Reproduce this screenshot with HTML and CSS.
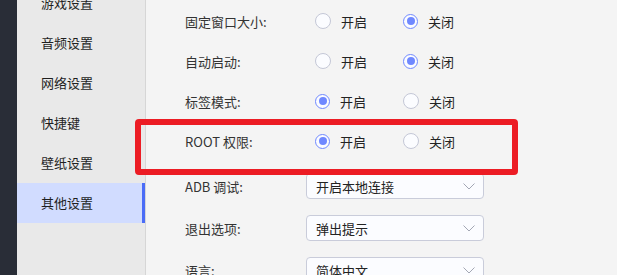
FILE: index.html
```html
<!DOCTYPE html>
<html lang="zh-CN">
<head>
    <meta charset="UTF-8">
    <meta name="viewport" content="width=device-width, initial-scale=1.0">
    <title>其他设置</title>
    <link rel="stylesheet" href="styles.css">
</head>
<body>
    <div class="app">
        <div class="rail"></div>

        <!-- 左侧菜单 -->
        <ul class="menu">
            <li>游戏设置</li>
            <li>音频设置</li>
            <li>网络设置</li>
            <li>快捷键</li>
            <li>壁纸设置</li>
            <li class="active">其他设置</li>
        </ul>

        <section class="settings">
            <div class="row">
                <span class="label">固定窗口大小:</span>
                <div class="radios">
                    <label class="radio"><span class="dot"></span>开启</label>
                    <label class="radio"><span class="dot on"></span>关闭</label>
                </div>
            </div>
            <div class="row">
                <span class="label">自动启动:</span>
                <div class="radios">
                    <label class="radio"><span class="dot"></span>开启</label>
                    <label class="radio"><span class="dot on"></span>关闭</label>
                </div>
            </div>
            <div class="row">
                <span class="label">标签模式:</span>
                <div class="radios">
                    <label class="radio"><span class="dot on"></span>开启</label>
                    <label class="radio"><span class="dot"></span>关闭</label>
                </div>
            </div>
            <div class="row marked">
                <span class="label">ROOT 权限:</span>
                <div class="radios">
                    <label class="radio"><span class="dot on"></span>开启</label>
                    <label class="radio"><span class="dot"></span>关闭</label>
                </div>
            </div>

            <div class="row select-row first">
                <span class="label">ADB 调试:</span>
                <div class="select">开启本地连接
                    <svg class="chev" width="12" height="7" viewBox="0 0 12 7"><polyline points="0.5,0.5 6,6 11.5,0.5" fill="none" stroke="#a3a7b4" stroke-width="1"/></svg>
                </div>
            </div>
            <div class="row select-row">
                <span class="label">退出选项:</span>
                <div class="select">弹出提示
                    <svg class="chev" width="12" height="7" viewBox="0 0 12 7"><polyline points="0.5,0.5 6,6 11.5,0.5" fill="none" stroke="#a3a7b4" stroke-width="1"/></svg>
                </div>
            </div>
            <div class="row select-row">
                <span class="label">语言:</span>
                <div class="select">简体中文
                    <svg class="chev" width="12" height="7" viewBox="0 0 12 7"><polyline points="0.5,0.5 6,6 11.5,0.5" fill="none" stroke="#a3a7b4" stroke-width="1"/></svg>
                </div>
            </div>
        </section>
    </div>
</body>
</html>
```

FILE: styles.css
```css
body {
    margin: 0;
    font-family: "Noto Sans CJK SC", "Noto Sans", sans-serif;
    font-size: 13px;
    color: #2b2b2b;
    background: #f4f4f4;
    overflow: hidden;
}
.app {
    display: flex;
    height: 275px;
}
.rail {
    width: 17px;
    background: #292d37;
    flex-shrink: 0;
}
.menu {
    list-style: none;
    margin: -17px 0 0;
    padding: 0;
    width: 128px;
    flex-shrink: 0;
    background: #e9e9e9;
    border-right: 1px solid #d6d6d6;
    height: 292px;
}
.menu li {
    height: 40px;
    line-height: 40px;
    padding-left: 24px;
    color: #1f1f1f;
}
.menu li.active {
    background: #d1dcff;
    box-shadow: inset -3px 0 0 #4a6cf7;
}
.settings {
    flex: 1;
    padding: 1px 0 0 39px;
}
.row {
    display: flex;
    align-items: center;
    height: 40px;
}
.label {
    width: 121px;
    color: #333;
}
.radios {
    display: flex;
    padding-left: 9px;
}
.radio {
    display: flex;
    align-items: center;
    width: 88px;
    color: #222;
}
.dot {
    width: 14px;
    height: 14px;
    border: 1px solid #c4c7d6;
    border-radius: 50%;
    background: #fbfcff;
    margin-right: 10px;
    position: relative;
}
.dot.on {
    border: 1.5px solid #6f88ff;
    width: 13px;
    height: 13px;
}
.dot.on::after {
    content: "";
    position: absolute;
    left: 2.5px;
    top: 2.5px;
    width: 8px;
    height: 8px;
    border-radius: 50%;
    background: #6f88ff;
}
.marked {
    position: relative;
}
.marked::before {
    content: "";
    position: absolute;
    left: -50px;
    top: -2px;
    width: 383px;
    height: 56px;
    box-sizing: border-box;
    border: 6px solid #ec1c24;
    border-radius: 4px;
}
.select-row {
    height: 42px;
}
.select-row.first {
    margin-top: 4px;
}
.select {
    width: 178px;
    height: 26px;
    box-sizing: border-box;
    border: 1px solid #c9ccda;
    border-radius: 4px;
    background: #fbfcff;
    padding-left: 9px;
    display: flex;
    align-items: center;
    justify-content: space-between;
    color: #222;
}
.chev {
    margin-right: 8px;
}
```
